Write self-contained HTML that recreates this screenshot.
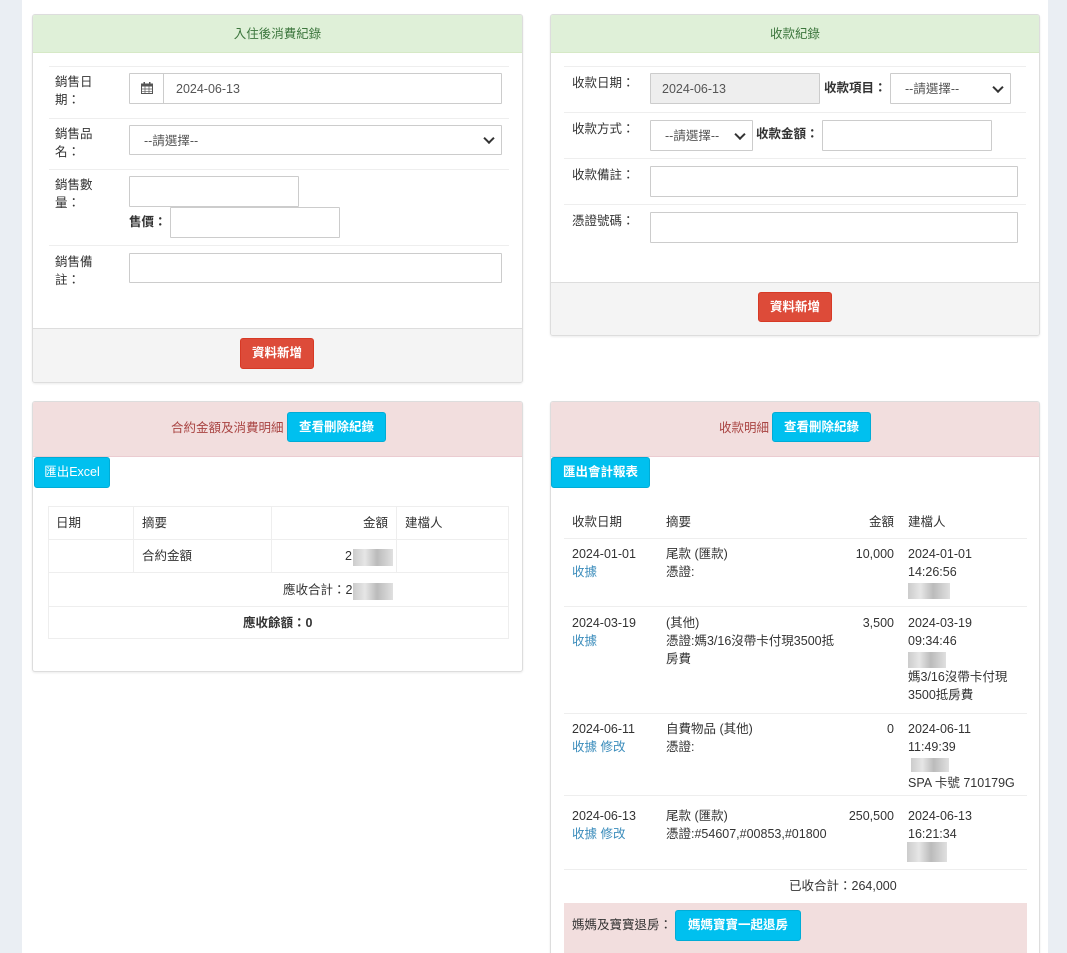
<!DOCTYPE html>
<html><head><meta charset="utf-8"><style>
*{box-sizing:border-box;margin:0;padding:0}
html,body{width:1067px;height:953px;overflow:hidden}
body{background:#fff;position:relative;font-family:"Liberation Sans","Noto Sans CJK TC",sans-serif;font-size:12.5px;line-height:18px;color:#333}
.a{position:absolute}
.strip{position:absolute;top:0;height:953px;background:#eaeef3}
.panel{position:absolute;border:1px solid #ddd;border-radius:3px;background:#fff;box-shadow:0 1px 2px rgba(0,0,0,.08);overflow:hidden}
.hd{position:absolute;left:0;right:0;top:0;text-align:center}
.g{background:#dff0d8;color:#3c763d;border-bottom:1px solid #d6e9c6}
.r{background:#f2dede;color:#a94442;border-bottom:1px solid #ebccd1}
.inp{position:absolute;border:1px solid #ccc;background:#fff;border-radius:1px}
.sel:after{content:"";position:absolute;right:8px;top:50%;width:6px;height:6px;border-right:2px solid #333;border-bottom:2px solid #333;transform:translateY(-70%) rotate(45deg)}
.line{position:absolute;height:1px;background:#eee}
.btn{position:absolute;color:#fff;border-radius:3px;text-align:center;font-weight:bold}
.red{background:#dd4b39;border:1px solid #d73925}
.blue{background:#00c0ef;border:1px solid #00acd6}
.lnk{color:#3c8dbc}
.blur{position:absolute;background:linear-gradient(90deg,#ccc,#e6e6e6 30%,#bbb 60%,#e0e0e0);}
.b{font-weight:bold}
</style></head><body>
<div class="strip" style="left:0;width:22px"></div>
<div class="strip" style="left:1048px;width:19px"></div>

<!-- Panel 1 -->
<div class="panel" style="left:32px;top:14px;width:491px;height:369px">
 <div class="hd g" style="height:38px;line-height:38px">入住後消費紀錄</div>
 <div class="line" style="left:16px;width:460px;top:51px"></div>
 <div class="a" style="left:22px;top:58px">銷售日<br>期：</div>
 <div class="inp" style="left:96px;top:58px;width:373px;height:31px"><div class="a" style="left:0;top:0;width:34px;height:29px;border-right:1px solid #ccc"><svg class="a" style="left:11px;top:8px" width="12" height="12" viewBox="0 0 12 12"><rect x="0.5" y="2" width="11" height="9.5" fill="none" stroke="#555"/><rect x="0.5" y="2" width="11" height="2.5" fill="#555"/><rect x="2.5" y="0" width="1.5" height="3" fill="#555"/><rect x="8" y="0" width="1.5" height="3" fill="#555"/><path d="M4 4.5v7M8 4.5v7M0.5 7h11M0.5 9.3h11" stroke="#555" stroke-width="0.7"/></svg></div><div class="a" style="left:46px;top:6px;color:#555">2024-06-13</div></div>
 <div class="line" style="left:16px;width:460px;top:103px"></div>
 <div class="a" style="left:22px;top:110px">銷售品<br>名：</div>
 <div class="inp sel" style="left:96px;top:110px;width:373px;height:30px"><div class="a" style="left:14px;top:6px;color:#555">--請選擇--</div></div>
 <div class="line" style="left:16px;width:460px;top:154px"></div>
 <div class="a" style="left:22px;top:161px">銷售數<br>量：</div>
 <div class="inp" style="left:96px;top:161px;width:170px;height:31px"></div>
 <div class="a b" style="left:96px;top:198px">售價：</div>
 <div class="inp" style="left:137px;top:192px;width:170px;height:31px"></div>
 <div class="line" style="left:16px;width:460px;top:230px"></div>
 <div class="a" style="left:22px;top:238px">銷售備<br>註：</div>
 <div class="inp" style="left:96px;top:238px;width:373px;height:30px"></div>
 <div class="a" style="left:0;right:0;top:313px;bottom:0;background:#f4f4f4;border-top:1px solid #ddd"></div>
 <div class="btn red" style="left:207px;top:323px;width:74px;height:31px;line-height:29px">資料新增</div>
</div>

<!-- Panel 2 -->
<div class="panel" style="left:550px;top:14px;width:490px;height:322px">
 <div class="hd g" style="height:38px;line-height:38px">收款紀錄</div>
 <div class="line" style="left:13px;width:462px;top:51px"></div>
 <div class="a" style="left:21px;top:59px">收款日期：</div>
 <div class="inp" style="left:99px;top:58px;width:170px;height:31px;background:#eee"><div class="a" style="left:11px;top:6px;color:#555">2024-06-13</div></div>
 <div class="a b" style="left:273px;top:64px">收款項目：</div>
 <div class="inp sel" style="left:339px;top:58px;width:121px;height:31px"><div class="a" style="left:14px;top:6px;color:#555">--請選擇--</div></div>
 <div class="line" style="left:13px;width:462px;top:97px"></div>
 <div class="a" style="left:21px;top:105px">收款方式：</div>
 <div class="inp sel" style="left:99px;top:105px;width:103px;height:31px"><div class="a" style="left:14px;top:6px;color:#555">--請選擇--</div></div>
 <div class="a b" style="left:205px;top:110px">收款金額：</div>
 <div class="inp" style="left:271px;top:105px;width:170px;height:31px"></div>
 <div class="line" style="left:13px;width:462px;top:143px"></div>
 <div class="a" style="left:21px;top:151px">收款備註：</div>
 <div class="inp" style="left:99px;top:151px;width:368px;height:31px"></div>
 <div class="line" style="left:13px;width:462px;top:189px"></div>
 <div class="a" style="left:21px;top:197px">憑證號碼：</div>
 <div class="inp" style="left:99px;top:197px;width:368px;height:31px"></div>
 <div class="a" style="left:0;right:0;top:267px;bottom:0;background:#f4f4f4;border-top:1px solid #ddd"></div>
 <div class="btn red" style="left:207px;top:277px;width:74px;height:30px;line-height:28px">資料新增</div>
</div>

<!-- Panel 3 -->
<div class="panel" style="left:32px;top:401px;width:491px;height:271px">
 <div class="hd r" style="height:55px"></div>
 <div class="a" style="left:138px;top:17px;color:#a94442">合約金額及消費明細</div>
 <div class="btn blue" style="left:254px;top:10px;width:99px;height:30px;line-height:28px">查看刪除紀錄</div>
 <div class="btn blue" style="left:1px;top:55px;width:76px;height:31px;line-height:29px;font-weight:normal">匯出Excel</div>
 <div class="a" style="left:15px;top:104px;width:461px;height:133px;border:1px solid #eee"></div>
 <div class="line" style="left:15px;width:461px;top:137px"></div>
 <div class="line" style="left:15px;width:461px;top:170px"></div>
 <div class="line" style="left:15px;width:461px;top:204px"></div>
 <div class="a" style="left:100px;top:104px;width:1px;height:66px;background:#eee"></div>
 <div class="a" style="left:238px;top:104px;width:1px;height:66px;background:#eee"></div>
 <div class="a" style="left:363px;top:104px;width:1px;height:66px;background:#eee"></div>
 <div class="a" style="left:23px;top:112px">日期</div>
 <div class="a" style="left:109px;top:112px">摘要</div>
 <div class="a" style="left:330px;top:112px">金額</div>
 <div class="a" style="left:372px;top:112px">建檔人</div>
 <div class="a" style="left:109px;top:145px">合約金額</div>
 <div class="a" style="left:312px;top:145px">2</div>
 <div class="blur" style="left:320px;top:147px;width:40px;height:17px"></div>
 <div class="a" style="left:250px;top:179px">應收合計：2</div>
 <div class="blur" style="left:320px;top:181px;width:40px;height:17px"></div>
 <div class="a b" style="left:210px;top:212px">應收餘額：0</div>
</div>

<!-- Panel 4 -->
<div class="panel" style="left:550px;top:401px;width:490px;height:560px">
 <div class="hd r" style="height:55px"></div>
 <div class="a" style="left:168px;top:17px;color:#a94442">收款明細</div>
 <div class="btn blue" style="left:221px;top:10px;width:99px;height:30px;line-height:28px">查看刪除紀錄</div>
 <div class="btn blue" style="left:0;top:55px;width:99px;height:31px;line-height:29px">匯出會計報表</div>
 <div class="a" style="left:21px;top:111px">收款日期</div>
 <div class="a" style="left:115px;top:111px">摘要</div>
 <div class="a" style="left:318px;top:111px">金額</div>
 <div class="a" style="left:357px;top:111px">建檔人</div>
 <div class="line" style="left:13px;width:463px;top:136px"></div>
 <div class="a" style="left:21px;top:143px">2024-01-01<br><span class="lnk">收據</span></div>
 <div class="a" style="left:115px;top:143px">尾款 (匯款)<br>憑證:</div>
 <div class="a" style="left:280px;top:143px;width:63px;text-align:right">10,000</div>
 <div class="a" style="left:357px;top:143px">2024-01-01<br>14:26:56</div>
 <div class="blur" style="left:357px;top:181px;width:42px;height:16px"></div>
 <div class="line" style="left:13px;width:463px;top:204px"></div>
 <div class="a" style="left:21px;top:212px">2024-03-19<br><span class="lnk">收據</span></div>
 <div class="a" style="left:115px;top:212px">(其他)<br>憑證:媽3/16沒帶卡付現3500抵<br>房費</div>
 <div class="a" style="left:280px;top:212px;width:63px;text-align:right">3,500</div>
 <div class="a" style="left:357px;top:212px">2024-03-19<br>09:34:46<br><br>媽3/16沒帶卡付現<br>3500抵房費</div>
 <div class="blur" style="left:357px;top:250px;width:38px;height:16px"></div>
 <div class="line" style="left:13px;width:463px;top:311px"></div>
 <div class="a" style="left:21px;top:318px">2024-06-11<br><span class="lnk">收據 修改</span></div>
 <div class="a" style="left:115px;top:318px">自費物品 (其他)<br>憑證:</div>
 <div class="a" style="left:280px;top:318px;width:63px;text-align:right">0</div>
 <div class="a" style="left:357px;top:318px">2024-06-11<br>11:49:39<br><br>SPA 卡號 710179G</div>
 <div class="blur" style="left:360px;top:356px;width:38px;height:14px"></div>
 <div class="line" style="left:13px;width:463px;top:393px"></div>
 <div class="a" style="left:21px;top:405px">2024-06-13<br><span class="lnk">收據 修改</span></div>
 <div class="a" style="left:115px;top:405px">尾款 (匯款)<br>憑證:#54607,#00853,#01800</div>
 <div class="a" style="left:280px;top:405px;width:63px;text-align:right">250,500</div>
 <div class="a" style="left:357px;top:405px">2024-06-13<br>16:21:34</div>
 <div class="blur" style="left:356px;top:440px;width:40px;height:20px"></div>
 <div class="line" style="left:13px;width:463px;top:467px"></div>
 <div class="a" style="left:238px;top:475px">已收合計：264,000</div>
 <div class="a" style="left:13px;top:501px;width:463px;height:60px;background:#f2dede"></div>
 <div class="a" style="left:21px;top:514px">媽媽及寶寶退房：</div>
 <div class="btn blue" style="left:124px;top:508px;width:126px;height:31px;line-height:29px">媽媽寶寶一起退房</div>
</div>
</body></html>
